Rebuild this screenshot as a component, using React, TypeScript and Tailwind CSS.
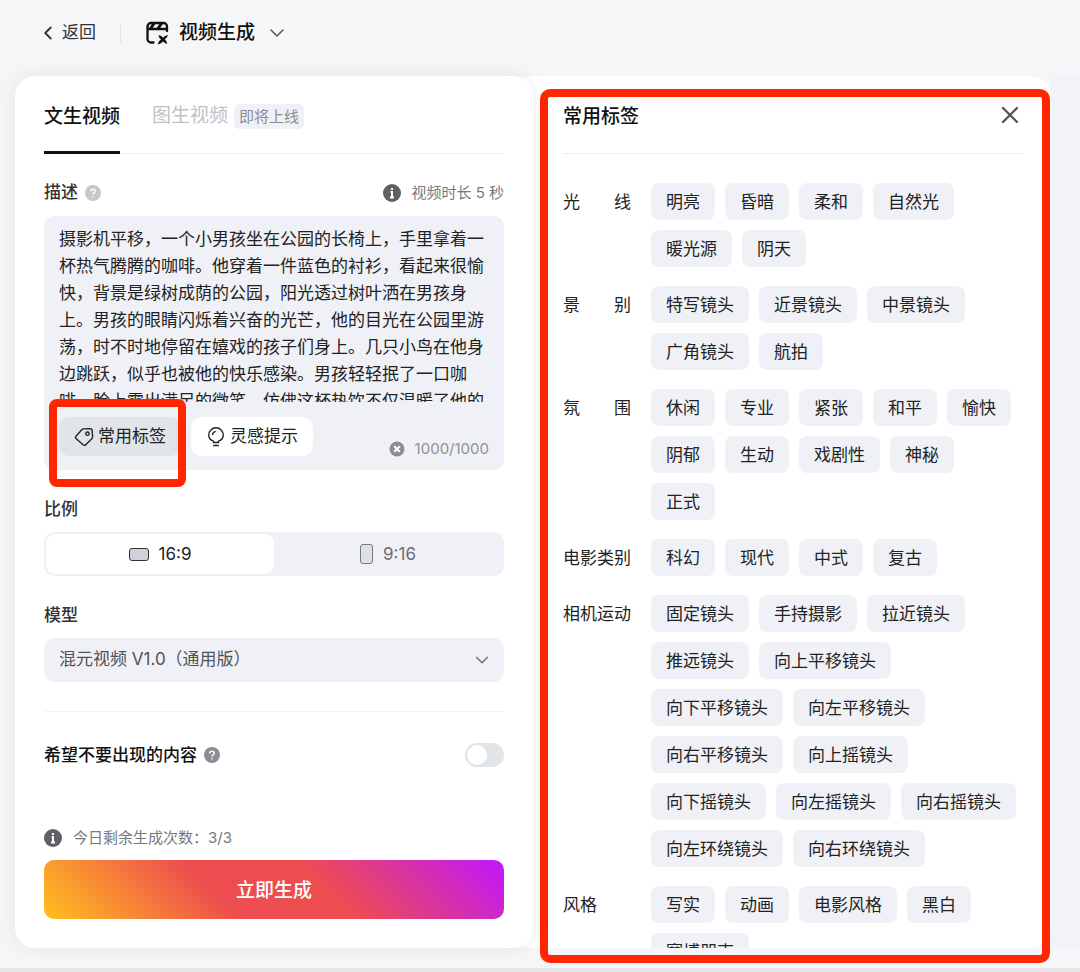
import React, { useState } from 'react';
import { LuChevronDown, LuChevronLeft, LuX } from 'react-icons/lu';

interface iTagGroup {
  label: string;
  tags: string[];
}

const tagGroups: iTagGroup[] = [
  { label: '光\u3000\u3000线', tags: ['明亮', '昏暗', '柔和', '自然光', '暖光源', '阴天'] },
  { label: '景\u3000\u3000别', tags: ['特写镜头', '近景镜头', '中景镜头', '广角镜头', '航拍'] },
  {
    label: '氛\u3000\u3000围',
    tags: ['休闲', '专业', '紧张', '和平', '愉快', '阴郁', '生动', '戏剧性', '神秘', '正式'],
  },
  { label: '电影类别', tags: ['科幻', '现代', '中式', '复古'] },
  {
    label: '相机运动',
    tags: [
      '固定镜头',
      '手持摄影',
      '拉近镜头',
      '推远镜头',
      '向上平移镜头',
      '向下平移镜头',
      '向左平移镜头',
      '向右平移镜头',
      '向上摇镜头',
      '向下摇镜头',
      '向左摇镜头',
      '向右摇镜头',
      '向左环绕镜头',
      '向右环绕镜头',
    ],
  },
  { label: '风格', tags: ['写实', '动画', '电影风格', '黑白', '赛博朋克'] },
];

const defaultPrompt =
  '摄影机平移，一个小男孩坐在公园的长椅上，手里拿着一杯热气腾腾的咖啡。他穿着一件蓝色的衬衫，看起来很愉快，背景是绿树成荫的公园，阳光透过树叶洒在男孩身上。男孩的眼睛闪烁着兴奋的光芒，他的目光在公园里游荡，时不时地停留在嬉戏的孩子们身上。几只小鸟在他身边跳跃，似乎也被他的快乐感染。男孩轻轻抿了一口咖啡，脸上露出满足的微笑，仿佛这杯热饮不仅温暖了他的';

const VideoIcon = () => (
  <svg width="24" height="24" viewBox="0 0 24 24" fill="none" aria-hidden="true">
    <path
      d="M8.500 21.500H6A3.500 3.500 0 0 1 2.500 18V5.500A3.500 3.500 0 0 1 6 2h12.500A3.500 3.500 0 0 1 22 5.500V10M2.500 8H22"
      stroke="#111"
      strokeWidth="2.300"
      strokeLinecap="round"
    />
    <path d="M9 2.500 5.500 7.500M16.500 2.500 13 7.500" stroke="#111" strokeWidth="3" />
    <path
      d="M13.500 14.200c2.300.3 3.500 1 4.600 2.600 1.100-1.700 2.300-2.500 4.800-2.900-.7 2.300-1.700 3.400-3.200 4.300 1.200 1 1.900 2.200 2.500 4.600-2.100-.5-3.100-1.300-4.100-2.600-1.400 1.800-2.700 2.600-5.400 3.100.8-2.500 1.900-3.700 3.400-4.800-1.400-.9-2.100-2-2.600-4.300Z"
      fill="#111"
    />
  </svg>
);

const TagIcon = () => (
  <svg width="20" height="20" viewBox="0 0 20 20" fill="none" stroke="#222" strokeWidth="1.400" aria-hidden="true">
    <path d="m9.500 1.900 6.700-.1a2 2 0 0 1 2 1.900l.4 6.200a2 2 0 0 1-.6 1.500l-6.200 6.300a2 2 0 0 1-2.700.1L2 11.500a1.500 1.500 0 0 1 0-2.200L8 2.500a2 2 0 0 1 1.500-.6Z" />
    <circle cx="13.500" cy="6.700" r="1.700" />
  </svg>
);

const BulbIcon = () => (
  <svg
    width="20"
    height="20"
    viewBox="0 0 20 20"
    fill="none"
    stroke="#222"
    strokeWidth="1.400"
    strokeLinecap="round"
    aria-hidden="true"
  >
    <path d="M7.500 15.500v-1.300c-2.900-1-4.800-3.300-4.800-6.100a7.300 7.300 0 0 1 14.600 0c0 2.800-1.900 5.100-4.800 6.100v1.300ZM7.800 18.500h4.400M6.500 7.500c.2-1.700 1.200-2.600 2.800-2.900" />
  </svg>
);

const InfoIcon = () => (
  <svg width="18" height="18" viewBox="0 0 18 18" aria-hidden="true">
    <circle cx="9" cy="9" r="9" fill="#5f6164" />
    <path d="M9 4v2M7.500 8H9v5M7 13.500h4" stroke="#fff" strokeWidth="2" />
  </svg>
);

const HelpIcon = ({ color }: { color: string }) => (
  <svg width="16" height="16" viewBox="0 0 16 16" fill="none" aria-hidden="true">
    <circle cx="8" cy="8" r="8" fill={color} />
    <path
      d="M5.800 6.400c0-1.300 1-2.100 2.200-2.100s2.200.8 2.200 2c0 1.500-2.200 1.600-2.200 3.200M8 11v1.400"
      stroke="#fff"
      strokeWidth="1.400"
    />
  </svg>
);

const ClearIcon = () => (
  <svg width="16" height="16" viewBox="0 0 16 16" aria-hidden="true">
    <circle cx="8" cy="8" r="7.500" fill="#8b8d92" />
    <path d="m5.200 5.200 5.600 5.600M10.800 5.200l-5.600 5.600" stroke="#fff" strokeWidth="2" />
  </svg>
);

const Header = () => (
  <header className="h-[76px] px-[37px] pb-[10px] flex items-center">
    <button type="button" className="flex items-center gap-[3px] text-[17px] text-[#333]">
      <LuChevronLeft className="text-[22px]" />
      返回
    </button>
    <span className="w-px h-5 mx-6 bg-[#e2e4e8]" />
    <button type="button" className="flex items-center gap-[10px] text-[19px] font-medium text-[#111]">
      <VideoIcon />
      视频生成
      <LuChevronDown className="text-[24px] text-[#555]" strokeWidth={1.5} />
    </button>
  </header>
);

const PromptBox = () => {
  const [prompt, setPrompt] = useState(defaultPrompt);

  return (
    <div className="h-[254px] pt-[10px] rounded-[10px] bg-[#f0f1f6]">
      <textarea
        id="prompt"
        value={prompt}
        onChange={(e) => setPrompt(e.target.value)}
        className="block w-full h-[176px] px-[15px] resize-none overflow-hidden bg-transparent text-[17px] leading-[27px] text-[#222] outline-none"
      />
      <div className="mt-[15px] px-[15px] flex items-start gap-[10px]">
        <div className="relative">
          <button
            type="button"
            className="h-[39px] px-[15px] flex items-center gap-1 rounded-[10px] bg-[#e1e4e9] text-[17px] text-[#222]"
          >
            <TagIcon />
            常用标签
          </button>
          <div className="absolute -left-[10px] -right-[5px] -top-[18px] -bottom-[31px] rounded-lg border-8 border-[#ff2600] pointer-events-none" />
        </div>
        <button
          type="button"
          className="h-[39px] px-[15px] flex items-center gap-1 rounded-[10px] bg-white text-[17px] text-[#222]"
        >
          <BulbIcon />
          灵感提示
        </button>
        <div className="ml-auto pt-5 flex items-center gap-[10px] text-[15px] leading-6 text-[#8f9196]">
          <button type="button" aria-label="清空" onClick={() => setPrompt('')}>
            <ClearIcon />
          </button>
          <span>1000/1000</span>
        </div>
      </div>
    </div>
  );
};

const GenerateForm = () => {
  const [ratio, setRatio] = useState('16:9');

  return (
    <form className="relative z-10 min-w-0 px-[29px] pb-[29px] rounded-[20px] bg-white shadow-[0_0_20px_rgba(0,0,0,0.07)]">
      <div className="h-[78px] flex items-stretch border-b border-[#edeef1] text-[19px]">
        <button type="button" className="h-[78px] pt-2 border-b-[3px] border-[#111] font-medium text-[#111]">
          文生视频
        </button>
        <button type="button" className="ml-8 pt-1 flex items-center gap-[6px] text-[#bfc1c6]">
          图生视频
          <span className="h-[25px] px-[5px] rounded-[5px] bg-[#f0f1f6] text-[15px] leading-[25px] text-[#8b8d92]">
            即将上线
          </span>
        </button>
      </div>

      <div className="mt-[27px] mb-[11px] h-6 flex items-center text-[17px]">
        <label htmlFor="prompt" className="mr-[7px] font-medium text-[#333]">
          描述
        </label>
        <HelpIcon color="#c4c7cd" />
        <span className="ml-auto flex items-center gap-[10px] text-[15px] text-[#77797d]">
          <InfoIcon />
          视频时长 5 秒
        </span>
      </div>
      <PromptBox />

      <fieldset className="mt-[27px]">
        <legend className="mb-[11px] text-[17px] leading-6 font-medium text-[#333]">比例</legend>
        <div className="h-11 p-[2px] flex rounded-[10px] bg-[#f0f1f6] text-[17px] text-[#6b6d72]">
          <label className="relative flex-1 flex items-center justify-center gap-[10px] rounded-[9px] has-checked:bg-white has-checked:text-[#222]">
            <input
              type="radio"
              name="ratio"
              className="sr-only"
              checked={ratio === '16:9'}
              onChange={() => setRatio('16:9')}
            />
            <span className="w-5 h-[13px] rounded-[3px] border-[1.5px] border-[#333] bg-[#d0d2d9]" />
            <span className="pt-[2px]">16:9</span>
          </label>
          <label className="relative flex-1 flex items-center justify-center gap-[10px] rounded-[9px] has-checked:bg-white has-checked:text-[#222]">
            <input
              type="radio"
              name="ratio"
              className="sr-only"
              checked={ratio === '9:16'}
              onChange={() => setRatio('9:16')}
            />
            <span className="w-[13px] h-5 rounded-[3px] border-[1.5px] border-[#77797d] bg-[#dfe1ea]" />
            <span className="pt-[2px]">9:16</span>
          </label>
        </div>
      </fieldset>

      <label htmlFor="model" className="block mt-[27px] mb-[11px] text-[17px] leading-6 font-medium text-[#333]">
        模型
      </label>
      <div className="relative">
        <select
          id="model"
          className="block w-full h-11 px-[15px] appearance-none rounded-[10px] bg-[#f0f1f6] text-[17px] text-[#505257] outline-none"
        >
          <option>混元视频 V1.0（通用版）</option>
        </select>
        <LuChevronDown
          className="absolute right-[11px] top-[11px] text-[22px] text-[#6b6d72] pointer-events-none"
          strokeWidth={1.5}
        />
      </div>

      <div className="mt-[29px] pt-[31px] flex items-center border-t border-[#f2f3f5]">
        <label htmlFor="negative" className="mr-[7px] text-[17px] leading-6 font-medium text-[#111]">
          希望不要出现的内容
        </label>
        <HelpIcon color="#8b8d92" />
        <input
          id="negative"
          type="checkbox"
          role="switch"
          className="ml-auto w-[39px] h-6 p-[2px] appearance-none rounded-full bg-[#e1e4e9] before:block before:size-5 before:rounded-full before:bg-white checked:bg-[#333] checked:before:ml-[15px]"
        />
      </div>

      <p className="mt-[59px] mb-[10px] flex items-center gap-[11px] text-[15px] leading-6 text-[#77797d]">
        <InfoIcon />
        今日剩余生成次数：3/3
      </p>
      <button
        type="button"
        className="block w-full h-[59px] pt-[3px] rounded-[10px] bg-[linear-gradient(45deg,#ffc01d_0%,#ee4d4f_38%,#ee4d4f_60%,#c016ff_100%)] text-[19px] font-medium text-white"
      >
        立即生成
      </button>
    </form>
  );
};

const TagPanel = () => (
  <aside className="relative min-w-0 flex flex-col">
    <div className="flex-1 -ml-5 pl-[50px] pr-[27px] flex flex-col rounded-[20px] bg-white overflow-hidden">
      <div className="h-[78px] flex items-center justify-between border-b border-[#edeef3]">
        <h2 className="pt-[6px] text-[19px] font-medium text-[#111]">常用标签</h2>
        <button type="button" aria-label="关闭" className="text-[#555]">
          <LuX className="text-[28px]" />
        </button>
      </div>
      <div className="flex-1 contain-size">
        <div className="pt-[29px] flex flex-col gap-[19px]">
          {tagGroups.map((group) => (
            <div key={group.label} className="flex gap-5 text-[17px] leading-[35px] text-[#222]">
              <span className="w-[68px] pt-[2px] shrink-0 whitespace-pre">{group.label}</span>
              <div className="flex flex-wrap gap-[10px]">
                {group.tags.map((tag) => (
                  <button key={tag} type="button" className="h-[37px] pt-[2px] px-[15px] rounded-lg bg-[#f0f1f6]">
                    {tag}
                  </button>
                ))}
              </div>
            </div>
          ))}
        </div>
      </div>
    </div>
    <div className="absolute left-[7px] right-px top-[13px] -bottom-[15px] rounded-[10px] border-8 border-[#ff2600] pointer-events-none" />
  </aside>
);

const App = () => {
  return (
    <div className="min-h-screen flex flex-col bg-[#f5f6f8] font-['Inter','Noto_Sans_CJK_SC',sans-serif]">
      <Header />
      <main className="pl-[15px] grid grid-cols-[1fr_1fr_29px]">
        <GenerateForm />
        <TagPanel />
        <div className="bg-[#f2f3f8]" />
      </main>
      <footer className="mt-5 h-1 bg-[#e5e6e8]" />
    </div>
  );
};

export default App;
